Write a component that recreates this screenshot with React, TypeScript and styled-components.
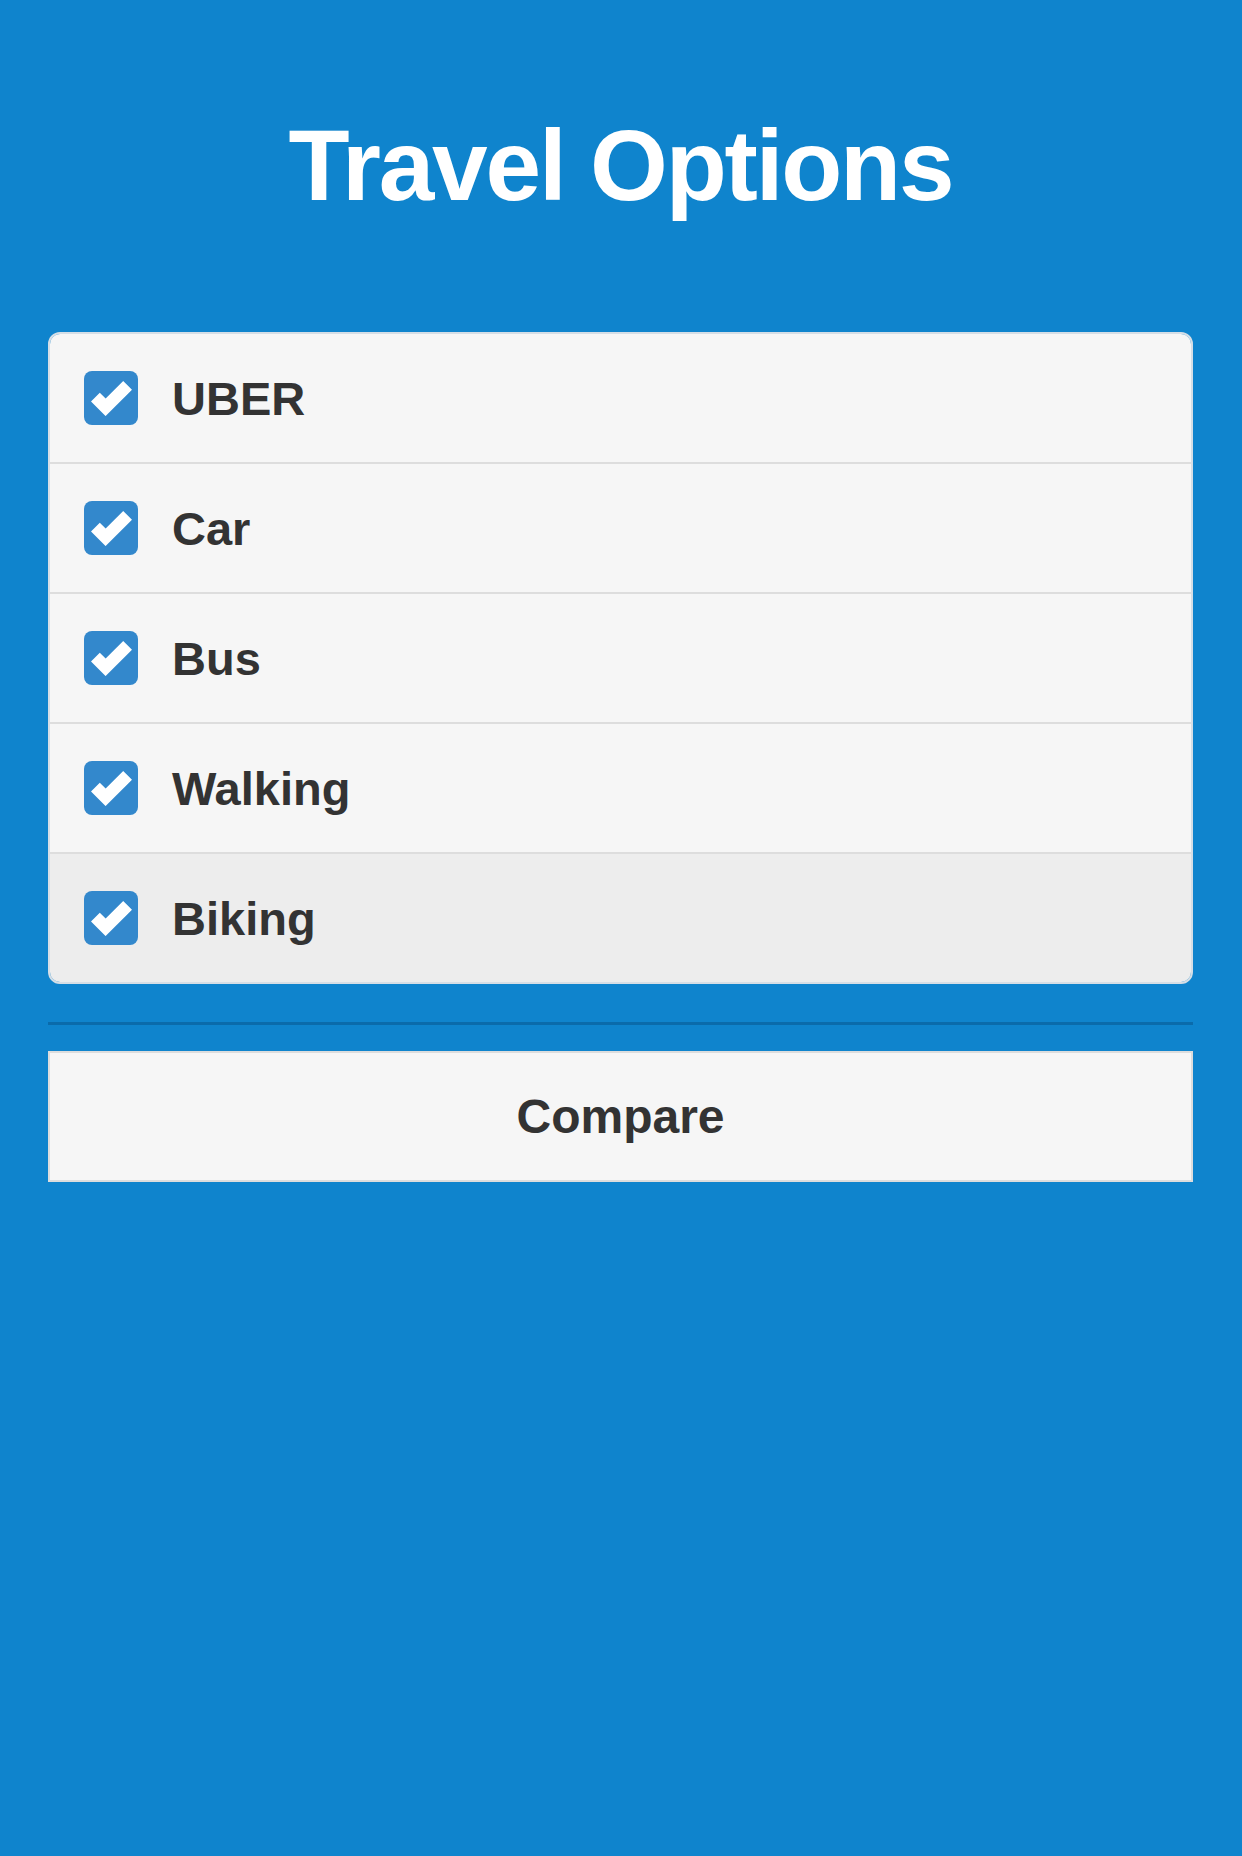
import React, { useState } from 'react';
import styled, { createGlobalStyle } from 'styled-components';

const GlobalStyle = createGlobalStyle`
  html, body {
    margin: 0;
    padding: 0;
    background: #0f84cd;
  }
  body {
    font-family: "Liberation Sans", Arial, Helvetica, sans-serif;
    min-height: 1856px;
  }
`;

const Page = styled.div`
  display: flex;
  flex-direction: column;
  padding: 105px 49px 0 48px;
`;

const Title = styled.h1`
  margin: 0 0 107px;
  text-align: center;
  color: #ffffff;
  font-size: 100px;
  line-height: 120px;
  font-weight: 700;
  letter-spacing: -2.2px;
`;

const OptionList = styled.div`
  display: flex;
  flex-direction: column;
  border: 2px solid #d5dee6;
  border-radius: 12px;
  overflow: hidden;
`;

const OptionRow = styled.label<{ $active?: boolean }>`
  display: flex;
  align-items: center;
  gap: 34px;
  height: 128px;
  padding: 0 34px;
  background: ${(p) => (p.$active ? '#ededed' : '#f6f6f6')};
  border-top: 2px solid #dddddd;
  cursor: pointer;

  &:first-child {
    border-top: none;
  }
`;

const CheckBox = styled.span<{ $checked: boolean }>`
  display: flex;
  align-items: center;
  justify-content: center;
  width: 54px;
  height: 54px;
  border-radius: 8px;
  background: ${(p) => (p.$checked ? '#3388cc' : '#cfcfcf')};
  flex-shrink: 0;
`;

const OptionLabel = styled.span`
  color: #333333;
  font-size: 47px;
  font-weight: 700;
`;

const Divider = styled.div`
  height: 3px;
  margin-top: 38px;
  background: #0a6bab;
`;

const CompareButton = styled.button`
  margin-top: 26px;
  height: 131px;
  border: 2px solid #dddddd;
  background: #f6f6f6;
  color: #333333;
  font-family: "Liberation Sans", Arial, Helvetica, sans-serif;
  font-size: 48px;
  font-weight: 700;
  cursor: pointer;
`;

const CheckIcon = () => (
  <svg width="41" height="41" viewBox="0 0 14 14">
    <polygon
      fill="#ffffff"
      points="14,4 11,1 5.003,6.997 3,5 0,8 4.966,13 4.983,12.982 5,13"
    />
  </svg>
);

const options = ['UBER', 'Car', 'Bus', 'Walking', 'Biking'];

export default function App() {
  const [checked, setChecked] = useState<boolean[]>(options.map(() => true));

  const toggle = (i: number) =>
    setChecked((c) => c.map((v, j) => (j === i ? !v : v)));

  return (
    <>
      <GlobalStyle />
      <Page>
        <Title>Travel Options</Title>
        <OptionList>
          {options.map((name, i) => (
            <OptionRow
              key={name}
              $active={i === options.length - 1}
              onClick={() => toggle(i)}
            >
              <CheckBox $checked={checked[i]}>
                {checked[i] && <CheckIcon />}
              </CheckBox>
              <OptionLabel>{name}</OptionLabel>
            </OptionRow>
          ))}
        </OptionList>
        <Divider />
        <CompareButton>Compare</CompareButton>
      </Page>
    </>
  );
}
